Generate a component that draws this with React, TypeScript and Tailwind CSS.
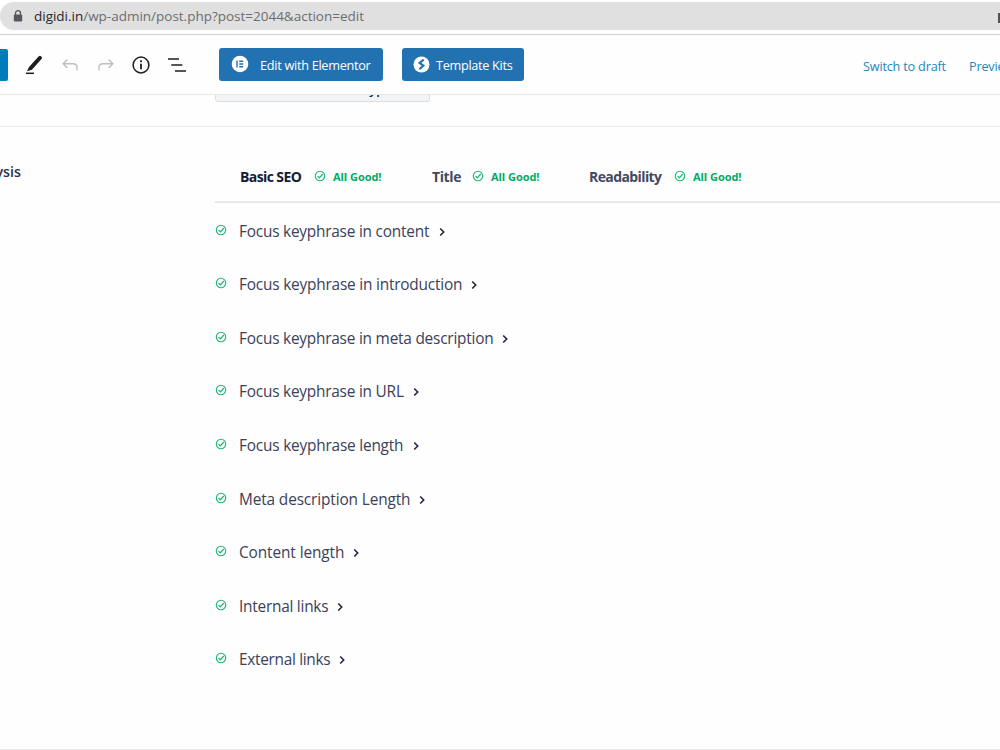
import React from 'react';

const checks = [
  { label: 'Focus keyphrase in content', className: 'w-[191px] tracking-[-0.22px]' },
  { label: 'Focus keyphrase in introduction', className: 'w-[223px] tracking-[-0.2px]' },
  { label: 'Focus keyphrase in meta description', className: 'w-[254px] tracking-[-0.22px]' },
  { label: 'Focus keyphrase in URL', className: 'w-[165px] tracking-[-0.22px]' },
  { label: 'Focus keyphrase length', className: 'w-[165px] tracking-[-0.2px]' },
  { label: 'Meta description Length', className: 'w-[171px] tracking-[-0.13px]' },
  { label: 'Content length', className: 'w-[105px] tracking-[-0.1px]' },
  { label: 'Internal links', className: 'w-[89px] tracking-[-0.24px]' },
  { label: 'External links', className: 'w-[91px] tracking-[-0.3px]' },
];

const tabs = [
  { label: 'Basic SEO', className: 'w-[192px]', labelClass: 'w-[74px] font-bold tracking-[-0.6px] text-[#141b38]' },
  { label: 'Title', className: 'w-[157px]', labelClass: 'w-[40px] font-bold tracking-[-0.4px] text-[#434960]' },
  { label: 'Readability', className: 'w-[160px]', labelClass: 'w-[85px] font-bold tracking-[-0.6px] text-[#434960]' },
];

const CheckIcon = () => (
  <svg className="mb-[2px] block h-3 w-3 shrink-0" viewBox="0 0 12 12" fill="none" stroke="#1fb574">
    <circle cx="6" cy="6" r="4.7" strokeWidth="1.1" />
    <path d="M3.5 6.1 5.3 7.8 8.8 4" strokeWidth="1.25" />
  </svg>
);

const ChevronIcon = () => (
  <svg className="block h-[10px] w-[7px] shrink-0" viewBox="0 0 7 10" fill="none" stroke="#20263f" strokeWidth="1.6">
    <path d="M1.2 1.5 4.7 5 1.2 8.5" />
  </svg>
);

const AddressBar = () => (
  <div className="h-[35px] shrink-0 border-b border-[#d2d2d2] pt-[2px]">
    <div className="flex h-7 items-center rounded-l-full bg-[#e0e0e0] pl-[13px]">
      <svg className="block h-3 w-[10px]" viewBox="0 0 10 12">
        <path d="M2.5 5V3.2a2.5 2.5 0 0 1 5 0V5" fill="none" stroke="#55585c" strokeWidth="1.3" />
        <rect x="0.8" y="4.4" width="8.4" height="7" rx="1" fill="#55585c" />
      </svg>
      <div className="ml-[11px] whitespace-nowrap text-[13.5px] leading-5 tracking-[-0.01px] text-[#6b6e71]">
        <span className="text-[#25282b]">digidi.in</span>/wp-admin/post.php?post=2044&amp;action=edit
      </div>
      <span className="ml-auto mt-1 h-[10px] w-[2px] bg-[#505356]" />
    </div>
  </div>
);

const Toolbar = () => (
  <div className="flex h-[60px] shrink-0 items-center border-b border-[#e6e7e8]">
    <div className="h-8 w-2 rounded-r-[2px] bg-[#007cba]" />
    <svg className="ml-[17px] block h-5 w-[18px]" viewBox="0 0 18 20">
      <path d="M4 12 13.8 1.3a1.6 1.6 0 0 1 2.3 0l.4.4a1.6 1.6 0 0 1 0 2.3L6.9 14.8 2 16.2Z" fill="#1e1e1e" />
      <path d="M1 18.3h8" stroke="#1e1e1e" strokeWidth="1.5" />
    </svg>
    <svg className="ml-[19px] block h-4 w-4" viewBox="0 0 16 16" fill="none" stroke="#bfbfbf" strokeWidth="1.4">
      <path d="M5.5 2.5 1.2 6.7 5.5 11M1.2 6.7H11Q15 6.7 15 10.5V13.5" />
    </svg>
    <svg className="ml-5 block h-4 w-4" viewBox="0 0 16 16" fill="none" stroke="#bfbfbf" strokeWidth="1.4">
      <path d="M10.5 2.5 14.8 6.7 10.5 11M14.8 6.7H5Q1 6.7 1 10.5V13.5" />
    </svg>
    <svg className="ml-[18px] block h-[18px] w-[18px]" viewBox="0 0 18 18">
      <circle cx="9" cy="9" r="7.9" fill="none" stroke="#1e1e1e" strokeWidth="1.5" />
      <path d="M8.1 4.2h1.8v2H8.1zM8.1 7.8h1.8v5.4H8.1z" fill="#1e1e1e" />
    </svg>
    <svg className="ml-[17px] block h-4 w-[20px]" viewBox="0 0 20 16" stroke="#1e1e1e" strokeWidth="1.5">
      <path d="M1 2.1h11M4.3 8.1h11M8 14.1h11" />
    </svg>
    <button className="ml-8 flex h-[33px] w-[164px] shrink-0 items-center rounded-[3px] bg-[#2271b1] pl-[12px] text-white">
      <svg className="mb-[2px] block h-[18px] w-[18px]" viewBox="0 0 18 18">
        <circle cx="9" cy="9" r="8.3" fill="#fff" />
        <path d="M6 5.5v7M8.2 6.2h4M8.2 9h4M8.2 11.8h4" stroke="#2271b1" strokeWidth="1.4" />
      </svg>
      <span className="ml-[11px] whitespace-nowrap text-[12.7px] leading-5 tracking-[-0.28px]">Edit with Elementor</span>
    </button>
    <button className="ml-[19px] flex h-[33px] w-[122px] shrink-0 items-center rounded-[3px] bg-[#2271b1] pl-[11px] text-white">
      <svg className="block h-[17px] w-[17px] shrink-0" viewBox="0 0 17 17">
        <circle cx="8.5" cy="8.5" r="8" fill="#fff" />
        <path d="M10.7 3.7 6.6 6.9 10.4 9.6 6.4 13.3" fill="none" stroke="#2271b1" strokeWidth="2.1" />
      </svg>
      <span className="ml-[6px] whitespace-nowrap text-[12.7px] leading-5 tracking-[-0.3px]">Template Kits</span>
    </button>
    <span className="ml-auto w-[106px] shrink-0 whitespace-nowrap pt-[2px] text-[12.7px] leading-5 tracking-[-0.2px] text-[#2586ba]">Switch to draft</span>
    <span className="w-[31px] shrink-0 overflow-hidden whitespace-nowrap pt-[2px] text-[12.7px] leading-5 tracking-[-0.2px] text-[#2586ba]">Preview</span>
  </div>
);

const KeyphraseStrip = () => (
  <div className="flex h-8 shrink-0 items-start overflow-hidden border-b border-[#ececec] pl-[215px]">
    <div className="-mt-[25px] flex h-8 w-[215px] shrink-0 items-center whitespace-nowrap rounded-[3px] border border-[#dcdde1] bg-[#f3f4f5] pl-[70px] text-[13px] font-semibold text-[#141b38]">
      <span className="pt-[7px]">Add Focus Keyphrase</span>
    </div>
  </div>
);

const Analysis = () => (
  <div className="flex min-h-0 flex-1">
    <div className="flex w-[215px] shrink-0 justify-start overflow-hidden pt-[34px]">
      <div className="flex w-[21px] justify-end whitespace-nowrap text-[14.3px] font-semibold leading-[22px] text-[#2c324c]">Analysis</div>
    </div>
    <div className="flex min-w-0 flex-1 flex-col">
      <div className="flex h-[76px] shrink-0 items-end border-b-2 border-[#e8e8eb] pb-[12px] pl-[25px]">
        {tabs.map((tab) => (
          <div key={tab.label} className={`flex shrink-0 items-center ${tab.className}`}>
            <span className={`shrink-0 whitespace-nowrap text-[14px] leading-6 ${tab.labelClass}`}>{tab.label}</span>
            <CheckIcon />
            <span className="ml-[7px] whitespace-nowrap text-[11px] font-bold leading-5 tracking-[-0.05px] text-[#00aa63]">All Good!</span>
          </div>
        ))}
      </div>
      <div className="flex flex-col pt-[1px]">
        {checks.map((check) => (
          <div key={check.label} className="flex h-[53.55px] items-center">
            <CheckIcon />
            <span className={`ml-3 shrink-0 whitespace-nowrap pt-[2px] text-[15.4px] leading-6 text-[#3b4159] ${check.className}`}>{check.label}</span>
            <span className="ml-[9px] mt-[2px]"><ChevronIcon /></span>
          </div>
        ))}
      </div>
    </div>
  </div>
);

const App = () => {
  return (
    <div className="flex h-[750px] w-[1000px] flex-col overflow-hidden border-b border-[#e6e6e6] bg-[#fefefe] font-['Open_Sans','Noto_Sans',sans-serif]">
      <AddressBar />
      <Toolbar />
      <KeyphraseStrip />
      <Analysis />
    </div>
  );
};

export default App;
